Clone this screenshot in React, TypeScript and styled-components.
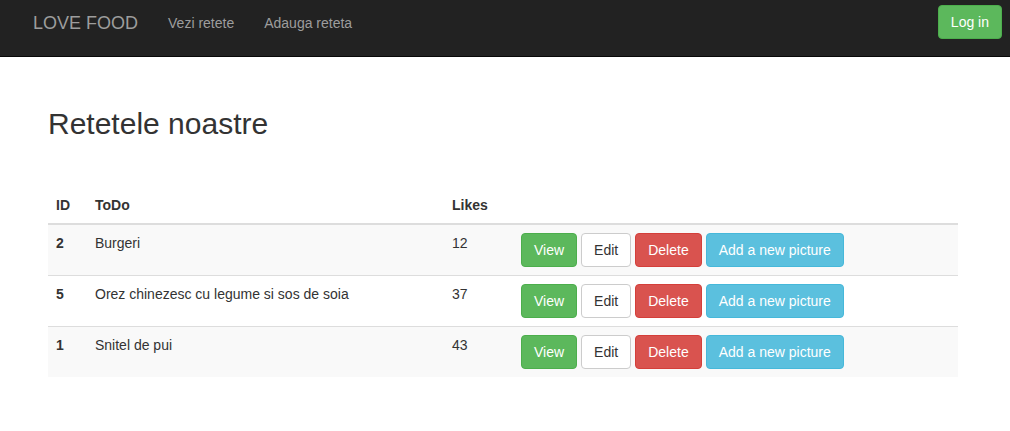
import React from "react";
import styled, { createGlobalStyle } from "styled-components";

const Global = createGlobalStyle`
  html, body { margin: 0; padding: 0; background: #fff; }
  body {
    font-family: "Liberation Sans", Arial, Helvetica, sans-serif;
    font-size: 14px;
    line-height: 20px;
    color: #333;
  }
  * { box-sizing: border-box; }
`;

const Navbar = styled.nav`
  height: 57px;
  background: #222;
  border-bottom: 1px solid #080808;
  display: flex;
  align-items: flex-start;
  justify-content: space-between;
  padding: 0 8px 0 18px;
`;

const NavLeft = styled.div`
  display: flex;
  align-items: center;
  height: 45px;
`;

const Brand = styled.a`
  font-size: 18px;
  line-height: 20px;
  color: #9d9d9d;
  padding: 0 15px;
  text-decoration: none;
`;

const NavLink = styled.a`
  font-size: 14px;
  line-height: 20px;
  color: #9d9d9d;
  padding: 0 15px;
  text-decoration: none;
`;

const NavRight = styled.div`
  display: flex;
  align-items: center;
  height: 44px;
`;

type Variant = "success" | "default" | "danger" | "info";

const palette: Record<Variant, { bg: string; border: string; color: string }> = {
  success: { bg: "#5cb85c", border: "#4cae4c", color: "#fff" },
  default: { bg: "#fff", border: "#ccc", color: "#333" },
  danger: { bg: "#d9534f", border: "#d43f3a", color: "#fff" },
  info: { bg: "#5bc0de", border: "#46b8da", color: "#fff" },
};

const Button = styled.button<{ $variant: Variant }>`
  font-family: inherit;
  font-size: 14px;
  line-height: 20px;
  padding: 6px 12px;
  border-radius: 4px;
  border: 1px solid ${(p) => palette[p.$variant].border};
  background: ${(p) => palette[p.$variant].bg};
  color: ${(p) => palette[p.$variant].color};
  cursor: pointer;
  white-space: nowrap;
`;

const Main = styled.main`
  padding: 0 52px 0 48px;
`;

const Title = styled.h1`
  font-size: 30px;
  line-height: 33px;
  font-weight: 500;
  margin: 50px 0 47px;
  color: #333;
`;

const Table = styled.table`
  width: 910px;
  border-collapse: collapse;
  border-spacing: 0;
`;

const Th = styled.th<{ $w?: number }>`
  text-align: left;
  font-weight: bold;
  padding: 8px;
  line-height: 20px;
  vertical-align: bottom;
  border-bottom: 2px solid #ddd;
  width: ${(p) => (p.$w ? `${p.$w}px` : "auto")};
`;

const Row = styled.tr<{ $striped: boolean }>`
  background: ${(p) => (p.$striped ? "#f9f9f9" : "#fff")};
`;

const Td = styled.td<{ $bold?: boolean }>`
  padding: 8px;
  line-height: 20px;
  vertical-align: top;
  border-top: 1px solid #ddd;
  font-weight: ${(p) => (p.$bold ? "bold" : "normal")};
`;

const Actions = styled.div`
  display: flex;
  gap: 4px;
`;

const recipes = [
  { id: 2, name: "Burgeri", likes: 12 },
  { id: 5, name: "Orez chinezesc cu legume si sos de soia", likes: 37 },
  { id: 1, name: "Snitel de pui", likes: 43 },
];

export default function App() {
  return (
    <>
      <Global />
      <Navbar>
        <NavLeft>
          <Brand href="#">LOVE FOOD</Brand>
          <NavLink href="#">Vezi retete</NavLink>
          <NavLink href="#">Adauga reteta</NavLink>
        </NavLeft>
        <NavRight>
          <Button $variant="success">Log in</Button>
        </NavRight>
      </Navbar>
      <Main>
        <Title>Retetele noastre</Title>
        <Table>
          <thead>
            <tr>
              <Th $w={39}>ID</Th>
              <Th $w={357}>ToDo</Th>
              <Th $w={69}>Likes</Th>
              <Th></Th>
            </tr>
          </thead>
          <tbody>
            {recipes.map((r, i) => (
              <Row key={r.id} $striped={i % 2 === 0}>
                <Td $bold>{r.id}</Td>
                <Td>{r.name}</Td>
                <Td>{r.likes}</Td>
                <Td>
                  <Actions>
                    <Button $variant="success">View</Button>
                    <Button $variant="default">Edit</Button>
                    <Button $variant="danger">Delete</Button>
                    <Button $variant="info">Add a new picture</Button>
                  </Actions>
                </Td>
              </Row>
            ))}
          </tbody>
        </Table>
      </Main>
    </>
  );
}
